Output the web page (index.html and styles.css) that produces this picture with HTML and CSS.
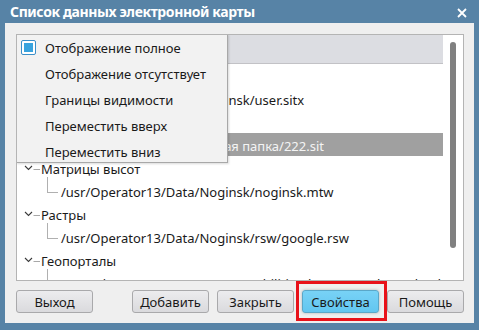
FILE: index.html
```html
<!DOCTYPE html>
<html>

<head>
  <title>Список данных электронной карты</title>
  <link rel="stylesheet" href="styles.css">
</head>

<body>
  <div class="window">
    <div class="titlebar">
      <span class="title">Список данных электронной карты</span>
      <svg class="close" width="10" height="10" viewBox="0 0 10 10">
        <path d="M1 1 L9 9 M9 1 L1 9" stroke="#ffffff" stroke-width="1.8" fill="none" />
      </svg>
    </div>

    <div class="client">
      <div class="tree">
        <div class="tree-body">
          <div class="tree-header"></div>
          <div class="rows">
            <div class="row top">
              <svg class="arrow" width="16" height="8" viewBox="0 0 16 8"><path class="chev" d="M1 2 L4.5 5.5 L8 2" /><path class="dash" d="M9.5 5.5 H16" /></svg>
              Пользовательские карты
            </div>
            <div class="row child"><span class="branch"></span>/usr/Operator13/Data/Noginsk/user.sitx</div>
            <div class="row top">
              <svg class="arrow" width="16" height="8" viewBox="0 0 16 8"><path class="chev" d="M1 2 L4.5 5.5 L8 2" /><path class="dash" d="M9.5 5.5 H16" /></svg>
              Векторные карты
            </div>
            <div class="row child selected"><span class="branch"></span>/usr/Operator13/Data/Новая папка/222.sit</div>
            <div class="row top">
              <svg class="arrow" width="16" height="8" viewBox="0 0 16 8"><path class="chev" d="M1 2 L4.5 5.5 L8 2" /><path class="dash" d="M9.5 5.5 H16" /></svg>
              Матрицы высот
            </div>
            <div class="row child"><span class="branch"></span>/usr/Operator13/Data/Noginsk/noginsk.mtw</div>
            <div class="row top">
              <svg class="arrow" width="16" height="8" viewBox="0 0 16 8"><path class="chev" d="M1 2 L4.5 5.5 L8 2" /><path class="dash" d="M9.5 5.5 H16" /></svg>
              Растры
            </div>
            <div class="row child"><span class="branch"></span>/usr/Operator13/Data/Noginsk/rsw/google.rsw</div>
            <div class="row top">
              <svg class="arrow" width="16" height="8" viewBox="0 0 16 8"><path class="chev" d="M1 2 L4.5 5.5 L8 2" /><path class="dash" d="M9.5 5.5 H16" /></svg>
              Геопорталы
            </div>
            <div class="row child"><span class="branch"></span>WMTS:http://TransWMS/GetCapabilities?layer=google&amp;style=default</div>
          </div>
        </div>
        <div class="scroll">
          <div class="handle"></div>
        </div>

        <div class="menu">
          <div class="menu-item"><span class="check"><span class="check-fill"></span></span>Отображение полное</div>
          <div class="menu-item">Отображение отсутствует</div>
          <div class="menu-item">Границы видимости</div>
          <div class="menu-item">Переместить вверх</div>
          <div class="menu-item">Переместить вниз</div>
        </div>
      </div>

      <div class="buttons">
        <button>Выход</button>
        <div class="spacer"></div>
        <button>Добавить</button>
        <button>Закрыть</button>
        <button class="primary">Свойства</button>
        <button>Помощь</button>
      </div>
    </div>
  </div>
</body>

</html>
```

FILE: styles.css
```css
body {
  margin: 0;
  font-family: "Noto Sans", sans-serif;
  font-size: 13px;
  color: #1a1a1a;
  background-color: #5783a6;
}

.window {
  width: 479px;
  height: 330px;
  box-sizing: border-box;
  background-color: #5783a6;
  padding: 0 5px 7px 5px;
  display: flex;
  flex-direction: column;
}

.titlebar {
  height: 25px;
  display: flex;
  align-items: center;
  justify-content: space-between;
  padding: 0 7px 0 5px;
}

.title {
  color: #ffffff;
  font-weight: bold;
  font-size: 14px;
  letter-spacing: -0.4px;
}

.close {
  margin-top: 2px;
}

.client {
  flex: 1;
  background-color: #efefef;
  padding: 11px 10px 10px 11px;
  display: flex;
  flex-direction: column;
}

.tree {
  position: relative;
  height: 247px;
  box-sizing: border-box;
  border: 1px solid #b4b4b4;
  background-color: #ffffff;
  display: flex;
  overflow: hidden;
}

.tree-body {
  flex: 1;
  overflow: hidden;
}

.tree-header {
  height: 28px;
  background-color: #dcdde2;
  border-bottom: 1px solid #c2c2c6;
}

.row {
  height: 23px;
  box-sizing: border-box;
  padding-top: 3px;
  display: flex;
  align-items: center;
  white-space: nowrap;
  position: relative;
}

.row.top {
  padding-left: 7px;
}

.arrow {
  margin-right: 1px;
  margin-top: -3px;
}

.chev {
  stroke: #3a3a3a;
  stroke-width: 1.1;
  fill: none;
}

.dash {
  stroke: #a8a8a8;
  stroke-width: 1;
  fill: none;
}

.row.child {
  padding-left: 44px;
}

.branch {
  position: absolute;
  left: 30px;
  top: -2px;
  width: 10px;
  height: 15px;
  border-left: 1px solid #b0b0b0;
  border-bottom: 1px solid #b0b0b0;
}

.row.selected {
  background-color: #a0a0a0;
  color: #f4f4f4;
}

.scroll {
  width: 20px;
  display: flex;
  justify-content: center;
  padding-top: 7px;
}

.handle {
  width: 6px;
  height: 206px;
  border-radius: 3px;
  background-color: #808080;
}

.menu {
  position: absolute;
  left: -1px;
  top: -1px;
  width: 212px;
  height: 129px;
  box-sizing: border-box;
  background-color: #f2f2f2;
  border: 1px solid #a8a8a8;
  box-shadow: 1px 1px 2px rgba(0, 0, 0, 0.15);
}

.menu-item {
  height: 26px;
  display: flex;
  align-items: center;
  padding-left: 28px;
  position: relative;
}

.check {
  position: absolute;
  left: 4px;
  top: 5px;
  width: 15px;
  height: 15px;
  box-sizing: border-box;
  border: 1px solid #3b8fc9;
  border-radius: 2px;
  background-color: #ffffff;
  padding: 2px;
}

.check-fill {
  display: block;
  width: 9px;
  height: 9px;
  background-color: #38a3de;
}

.buttons {
  display: flex;
  gap: 8px;
  margin-top: 9px;
}

.spacer {
  flex: 1;
}

button {
  width: 77px;
  height: 23px;
  font-family: "Noto Sans", sans-serif;
  font-size: 13px;
  color: #1a1a1a;
  border: 1px solid #a9a9ab;
  border-radius: 3px;
  background: linear-gradient(#ececee, #dadadd);
  padding: 0;
}

button.primary {
  position: relative;
  background: linear-gradient(#78d2f6, #62c6f0);
  border-color: #5aa7c8;
  box-shadow: 0 0 3px rgba(90, 90, 90, 0.4);
}

button.primary::after {
  content: "";
  position: absolute;
  left: -7px;
  right: -9px;
  top: -10px;
  bottom: -9px;
  border: 3px solid #e8121a;
}
```
